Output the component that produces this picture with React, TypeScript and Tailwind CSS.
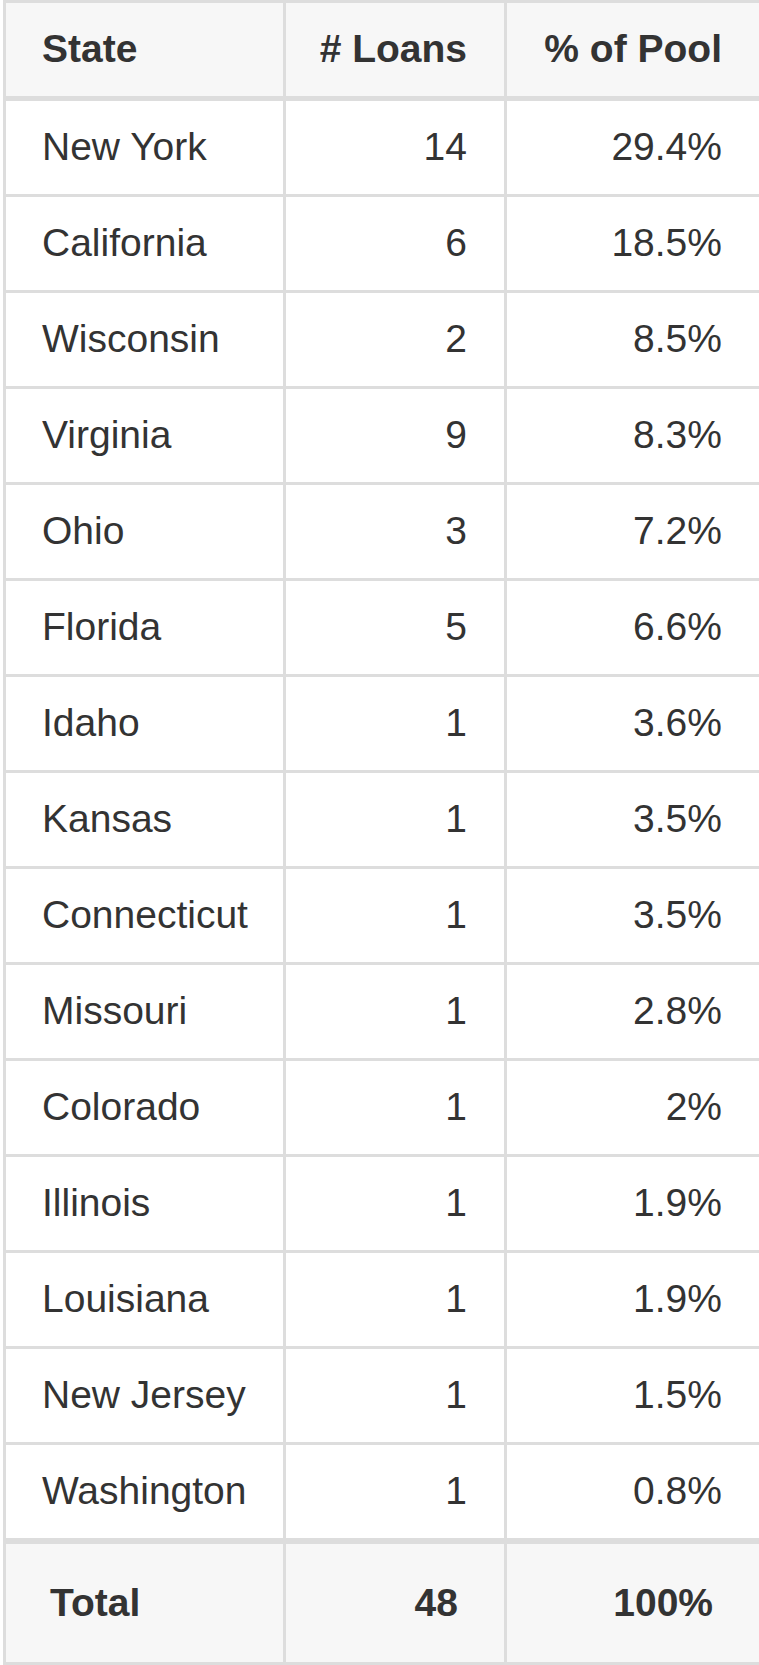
const rows: [string, string, string][] = [
  ["New York", "14", "29.4%"],
  ["California", "6", "18.5%"],
  ["Wisconsin", "2", "8.5%"],
  ["Virginia", "9", "8.3%"],
  ["Ohio", "3", "7.2%"],
  ["Florida", "5", "6.6%"],
  ["Idaho", "1", "3.6%"],
  ["Kansas", "1", "3.5%"],
  ["Connecticut", "1", "3.5%"],
  ["Missouri", "1", "2.8%"],
  ["Colorado", "1", "2%"],
  ["Illinois", "1", "1.9%"],
  ["Louisiana", "1", "1.9%"],
  ["New Jersey", "1", "1.5%"],
  ["Washington", "1", "0.8%"],
];

export default function App() {
  return (
    <div className="w-[759px] overflow-hidden bg-white pl-[3px] text-[#333] font-['Liberation_Sans',Arial,sans-serif] text-[39px]">
      <div className="w-[756px] border-l-[3px] border-t-[3px] border-[#dddddd]">
        {/* header */}
        <div className="grid grid-cols-[280px_221px_1fr] bg-[#f7f7f7] border-b-[5px] border-[#dddddd] font-bold">
          <div className="h-[93px] flex items-center pl-[36px] border-r-[3px] border-[#dddddd]">State</div>
          <div className="h-[93px] flex items-center justify-end pr-[37px] border-r-[3px] border-[#dddddd]"># Loans</div>
          <div className="h-[93px] flex items-center justify-end pr-[37px]">% of Pool</div>
        </div>

        {rows.map(([state, loans, pct], i) => (
          <div
            key={state}
            className={
              i === rows.length - 1
                ? "grid grid-cols-[280px_221px_1fr] border-b-[6px] border-[#dddddd]"
                : "grid grid-cols-[280px_221px_1fr] border-b-[3px] border-[#dddddd]"
            }
          >
            <div className="h-[93px] flex items-center pl-[36px] border-r-[3px] border-[#dddddd]">{state}</div>
            <div className="h-[93px] flex items-center justify-end pr-[37px] border-r-[3px] border-[#dddddd]">{loans}</div>
            <div className="h-[93px] flex items-center justify-end pr-[37px]">{pct}</div>
          </div>
        ))}

        {/* total */}
        <div className="grid grid-cols-[280px_221px_1fr] bg-[#f7f7f7] border-b-[3px] border-[#dddddd] font-bold">
          <div className="h-[118px] flex items-center pl-[44px] border-r-[3px] border-[#dddddd]">Total</div>
          <div className="h-[118px] flex items-center justify-end pr-[46px] border-r-[3px] border-[#dddddd]">48</div>
          <div className="h-[118px] flex items-center justify-end pr-[46px]">100%</div>
        </div>
      </div>
    </div>
  );
}
